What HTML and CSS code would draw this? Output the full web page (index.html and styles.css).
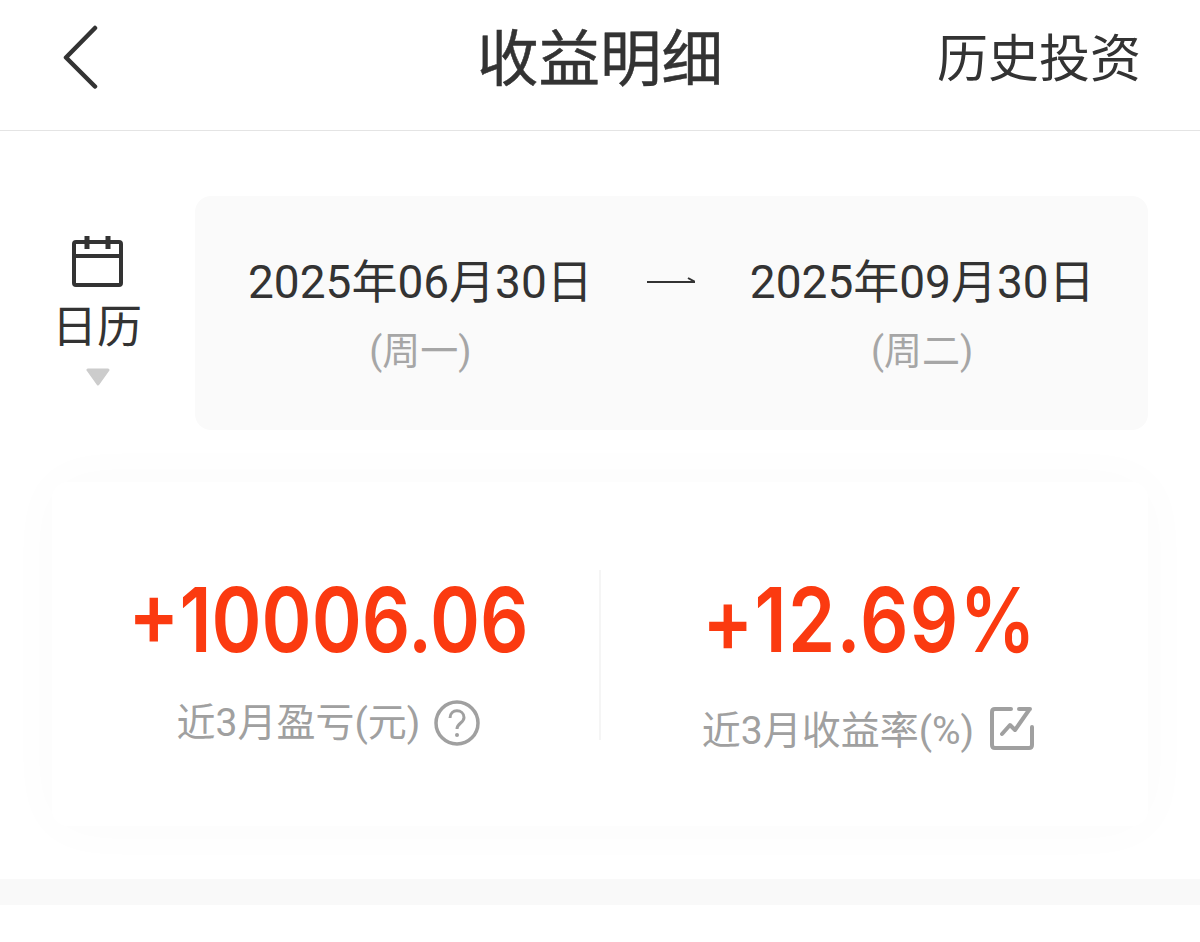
FILE: index.html
```html
<!DOCTYPE html>
<html lang="zh">
<head>
<meta charset="utf-8">
<title>收益明细</title>
<link rel="stylesheet" href="styles.css">
</head>
<body>
<header class="topbar">
  <svg class="back" width="36" height="65" viewBox="0 0 36 65"><path d="M32 3 L3 32.500 L32 61.500" fill="none" stroke="#333" stroke-width="4.500" stroke-linecap="round" stroke-linejoin="round"/></svg>
  <h1 class="title">收益明细</h1>
  <a class="history">历史投资</a>
</header>
<section class="range">
  <div class="cal">
    <svg class="cal-icon" width="54" height="53" viewBox="0 0 54 53"><g fill="none" stroke="#333"><rect x="3" y="7" width="47" height="43" rx="2" stroke-width="4"/><path d="M3 21H50" stroke-width="4"/><path d="M16 1V14M37 1V14" stroke-width="5"/></g></svg>
    <div class="cal-label">日历</div>
    <svg class="cal-arrow" width="24" height="18" viewBox="0 0 24 18"><path d="M2 2H22L12 16Z" fill="#ccc" stroke="#ccc" stroke-width="3" stroke-linejoin="round"/></svg>
  </div>
  <div class="dates">
    <div class="date"><div class="date-main">2025年06月30日</div><div class="date-week">(周一)</div></div>
    <svg class="arrow" width="48" height="8" viewBox="0 0 48 8"><path d="M0 6H48L41 2" fill="none" stroke="#333" stroke-width="2"/></svg>
    <div class="date"><div class="date-main">2025年09月30日</div><div class="date-week">(周二)</div></div>
  </div>
</section>
<section class="card">
  <div class="stat stat-left">
    <div class="num">+10006.06</div>
    <div class="label">近3月盈亏(元)
      <svg class="ic" width="46" height="46" viewBox="0 0 46 46"><circle cx="23" cy="23" r="21" fill="none" stroke="#a0a0a0" stroke-width="3.500"/><path d="M16 18C16 8 30 9 30 17.500C30 23 23 23 23 29" fill="none" stroke="#a0a0a0" stroke-width="3"/><circle cx="23" cy="35" r="2" fill="#a0a0a0"/></svg>
    </div>
  </div>
  <div class="stat stat-right">
    <div class="num">+12.69%</div>
    <div class="label">近3月收益率(%)
      <svg class="ic ic-chart" width="44" height="44" viewBox="0 0 44 44"><g fill="none" stroke="#a0a0a0" stroke-width="4" stroke-linecap="round" stroke-linejoin="round"><path d="M21 3H5Q2 3 2 6V39Q2 42 5 42H39Q42 42 42 39V21"/><path d="M12 28L20 19L25 24L39 4M29 3H40"/></g></svg>
    </div>
  </div>
</section>
<div class="band"></div>
</body>
</html>
```
FILE: styles.css
```css
* { box-sizing: border-box; }
html, body { margin: 0; padding: 0; }
body {
  width: 1200px;
  height: 942px;
  overflow: hidden;
  background: #fff;
  color: #333;
  font-family: Roboto, "Noto Sans CJK SC", sans-serif;
}
.topbar {
  height: 131px;
  border-bottom: 1px solid #e4e4e4;
  display: grid;
  grid-template-columns: 1fr auto 1fr;
  align-items: center;
  padding: 0 59px 10px 59px;
}
.back { margin: 0 0 6px 4px; }
.title {
  margin: 0;
  font-size: 61.500px;
  font-weight: 400;
  -webkit-text-stroke: 0.5px #333;
  line-height: 80px;
}
.history { font-size: 51px; line-height: 66px; justify-self: end; }
.range {
  display: flex;
  margin-top: 65px;
  padding: 0 52px 0 0;
}
.cal {
  width: 195px;
  flex: none;
  display: flex;
  flex-direction: column;
  align-items: center;
  padding-top: 39px;
}
.cal-icon { display: block; }
.cal-label { font-size: 45px; line-height: 60px; margin-top: 10px; padding-right: 1px; }
.cal-arrow { display: block; margin-top: 10px; }
.dates {
  flex: 1;
  height: 234px;
  background: #fafafa;
  border-radius: 16px;
  display: flex;
  align-items: flex-start;
  padding: 55px 0 0 53px;
}
.date { text-align: center; }
.date-main { font-size: 46px; line-height: 62px; }
.date-week { font-size: 38px; line-height: 50px; color: #a6a6a6; margin-top: 13px; }
.arrow { margin: 25px 55px 0 54px; }
.card {
  margin: 52px 52px 0;
  height: 344px;
  background: #fff;
  border-radius: 16px;
  box-shadow: 0 0 60px rgba(0, 0, 0, 0.025);
  display: flex;
  padding-top: 88px;
}
.stat { flex: 0 0 50%; text-align: center; height: 170px; }
.stat-left { flex-basis: calc(50% + 1px); border-right: 2px solid #f5f5f5; padding-left: 6px; }
.stat-right { padding-right: 14px; }
.num {
  font-family: Inter, sans-serif;
  font-size: 89px;
  line-height: 100px;
  font-weight: 600;
  color: #fb3a10;
  transform: scaleX(0.853);
}
.stat-right .num { letter-spacing: 1.500px; padding-left: 4px; }
.label {
  display: flex;
  align-items: center;
  justify-content: center;
  gap: 14px;
  font-size: 39px;
  line-height: 50px;
  color: #a0a0a0;
  margin-top: 28px;
}
.stat-right .label { margin-top: 36px; gap: 16px; }
.ic-chart { margin-bottom: 6px; }
.band {
  height: 26px;
  margin-top: 53px;
  background: #f9f9f9;
}
```
